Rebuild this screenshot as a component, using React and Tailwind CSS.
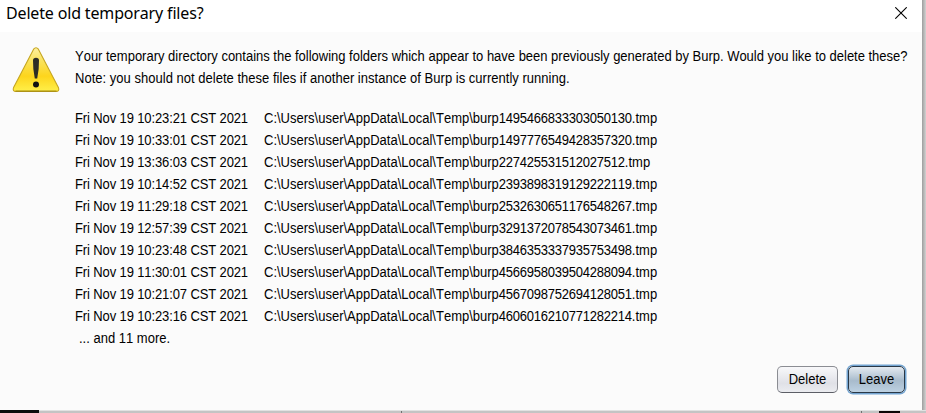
const files = [
  ["Fri Nov 19 10:23:21 CST 2021", "1495466833303050130"],
  ["Fri Nov 19 10:33:01 CST 2021", "1497776549428357320"],
  ["Fri Nov 19 13:36:03 CST 2021", "227425531512027512"],
  ["Fri Nov 19 10:14:52 CST 2021", "2393898319129222119"],
  ["Fri Nov 19 11:29:18 CST 2021", "2532630651176548267"],
  ["Fri Nov 19 12:57:39 CST 2021", "3291372078543073461"],
  ["Fri Nov 19 10:23:48 CST 2021", "3846353337935753498"],
  ["Fri Nov 19 11:30:01 CST 2021", "4566958039504288094"],
  ["Fri Nov 19 10:21:07 CST 2021", "4567098752694128051"],
  ["Fri Nov 19 10:23:16 CST 2021", "4606016210771282214"],
];

function WarningIcon() {
  return (
    <svg width="48" height="46" viewBox="0 0 48 46" className="block">
      <defs>
        <linearGradient id="warn" x1="0" y1="0" x2="0" y2="1">
          <stop offset="0" stopColor="#fff0a0" />
          <stop offset="0.3" stopColor="#f9e25c" />
          <stop offset="0.65" stopColor="#fdd51c" />
          <stop offset="1" stopColor="#fff04a" />
        </linearGradient>
      </defs>
      <path d="M21.6 2.2Q24 -.8 26.4 2.2L46.4 40.4Q47.8 44.4 44 44.5H4Q.2 44.4 1.6 40.4Z" fill="url(#warn)" stroke="#c6a620" strokeWidth="1.1" />
      <path d="M3.5 44.2H44.5" stroke="#a48b14" strokeWidth="1.2" />
      <path d="M21 13.5Q21 10.8 24 10.8T27 13.5Q27.2 22 25.2 31.5H22.8Q20.8 22 21 13.5Z" fill="#2c2c26" />
      <circle cx="24" cy="37.5" r="3" fill="#111" />
    </svg>
  );
}

export default function App() {
  return (
    <div className="flex h-[413px] w-[926px] flex-col overflow-hidden bg-[#c4c4c4] font-['Liberation_Sans',Arial,sans-serif] text-[13px] text-black [font-kerning:none]">
      <div className="flex h-[410px]">
        <div className="flex w-[922px] flex-col bg-[#fbfbfb]">
          <header className="flex h-8 items-center justify-between bg-white pr-[15px] pl-[6px]">
            <h1 className="h-8 font-['Noto_Sans',sans-serif] text-[16px] leading-[27px] tracking-[-0.16px] whitespace-nowrap">Delete old temporary files?</h1>
            <svg width="12" height="12" viewBox="0 0 12 12" className="-mt-[6px]">
              <path d="M.3.3 11.7 11.7M11.7.3.3 11.7" stroke="#000" strokeWidth="1.1" />
            </svg>
          </header>
          <main className="flex h-[326px] pl-3">
            <div className="w-[63px] pt-[15px]"><WarningIcon /></div>
            <div className="pt-[14px] leading-[22px] whitespace-nowrap">
              <p className="origin-[0_70%] scale-y-[1.08] tracking-[-0.01px]">Your temporary directory contains the following folders which appear to have been previously generated by Burp. Would you like to delete these?</p>
              <p className="origin-[0_70%] scale-y-[1.08] tracking-[0.02px]">Note: you should not delete these files if another instance of Burp is currently running.</p>
              <div className="mt-[18px]">
                {files.map(([date, id]) => (
                  <div key={id} className="flex origin-[0_70%] scale-y-[1.08]">
                    <span className="w-[189px] tracking-[-0.12px]">{date}</span>
                    <span>
                      {"C:\\Users\\user\\AppData\\Local\\Temp\\burp"}
                      <span className="tracking-[-0.23px]">{id}</span>
                      .tmp
                    </span>
                  </div>
                ))}
              </div>
              <p className="origin-[0_70%] scale-y-[1.08] pl-1">... and 11 more.</p>
            </div>
          </main>
          <footer className="flex items-start justify-end gap-[10px] pt-2 pr-[17px]">
            <button className="h-[27px] w-[61px] rounded-[5px] border border-[#8b8d93] border-b-[#5c5e66] bg-linear-to-b from-[#f8f8fa] via-[#e0e1e7] via-65% to-[#ebecf0]">
              <span className="block scale-y-[1.08]">Delete</span>
            </button>
            <button className="h-[27px] w-[57px] rounded-[5px] border border-[#293847] bg-linear-to-b from-[#e4eaf0] via-[#a8bbcc] via-55% to-[#bdd1e2] shadow-[0_0_0_1.5px_#73a4d1]">
              <span className="block scale-y-[1.08]">Leave</span>
            </button>
          </footer>
        </div>
        <div className="w-1 bg-linear-to-r from-[#9e9e9e] to-[#d2d2d2]" />
      </div>
      <div className="flex h-[3px] border-t border-[#e2e2e2]">
        <div className="-mt-px h-[3px] w-[39px] bg-[#0c0c0c]" />
        <div className="w-[362px]" />
        <div className="w-px bg-[#707070]" />
        <div className="w-[459px]" />
        <div className="w-px bg-[#707070]" />
        <div className="w-[17px]" />
        <div className="w-[21px] bg-[#0c0606]" />
      </div>
    </div>
  );
}
